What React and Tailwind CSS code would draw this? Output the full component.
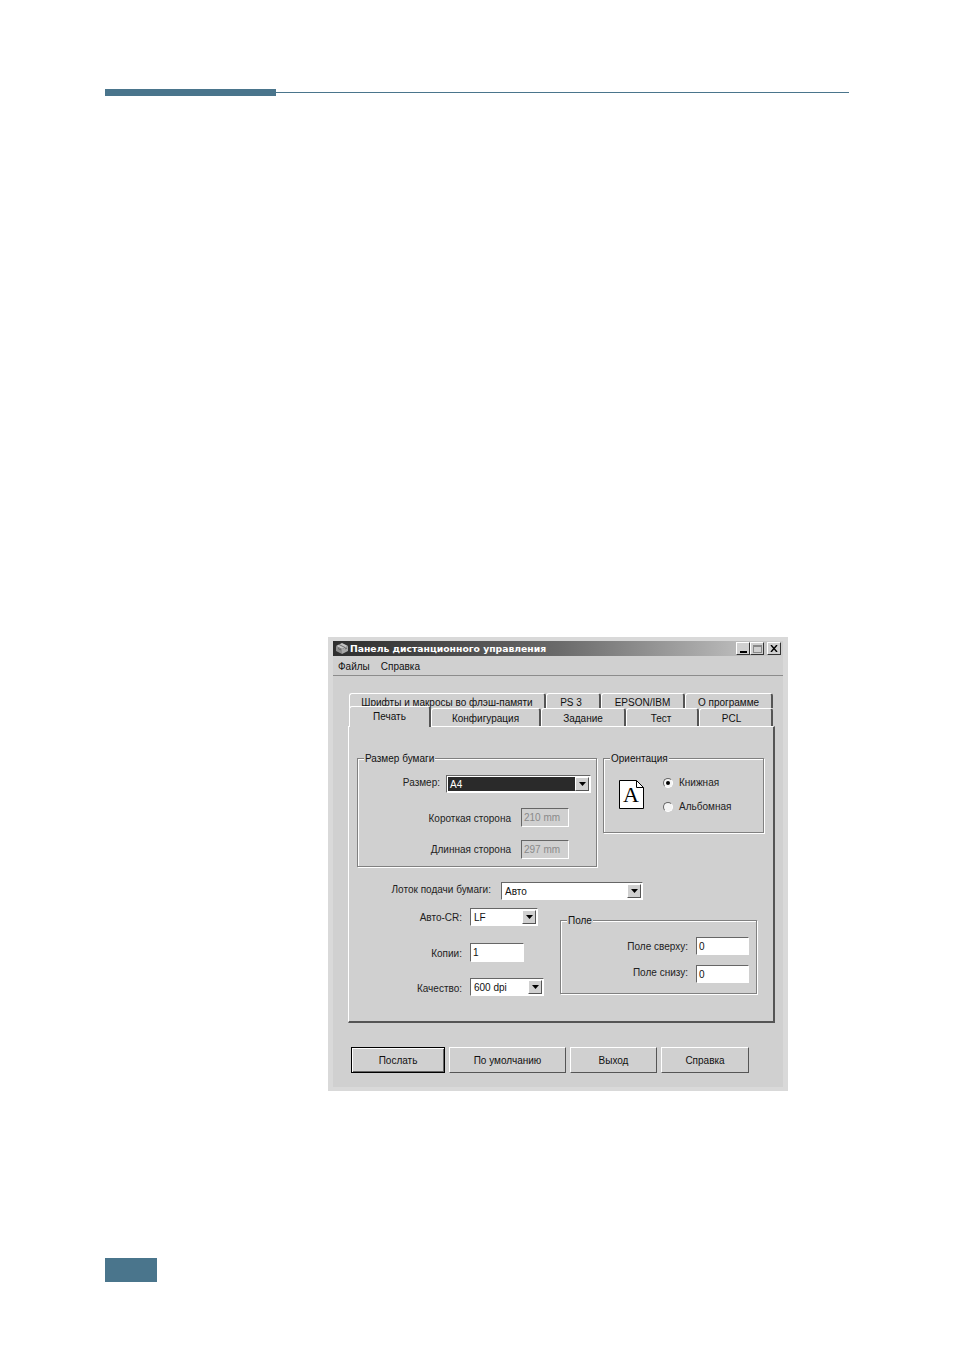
import React from 'react';

const sunken = 'border border-t-[#666] border-l-[#666] border-r-white border-b-white';
const raised = 'border border-t-white border-l-white border-r-[#555] border-b-[#555]';

// ---- small win95 style controls ----

function Field({ value, w, h = 'h-[18px]', disabled = false }) {
    return (
        <div className={`${w} ${h} ${sunken} flex items-center pl-[2px] pt-px text-[10px] leading-none ${disabled ? 'bg-[#d0d0d0] text-[#8a8a8a]' : 'bg-white text-[#111]'}`}>
            {value}
        </div>
    );
}

function Combo({ value, w, selected = false }) {
    return (
        <div className={`${w} h-[18px] ${sunken} bg-white flex items-center p-px text-[10px] leading-none text-[#111]`}>
            <div className={`flex-1 h-full flex items-center pl-[2px] pt-px ${selected ? 'bg-[#2a2a2a] text-white' : ''}`}>{value}</div>
            <div className={`w-[14px] h-full bg-[#d0d0d0] ${raised} flex items-center justify-center`}>
                <svg width="7" height="4" viewBox="0 0 7 4"><path d="M0 0h7L3.5 4z" fill="#000" /></svg>
            </div>
        </div>
    );
}

function Group({ title, className, children }) {
    return (
        <div className={`relative border border-[#808080] shadow-[inset_1px_1px_0_#fff,1px_1px_0_#fff] ${className}`}>
            <span className="absolute -top-[7px] left-[6px] bg-[#d0d0d0] px-px text-[10px] leading-[14px] text-[#111]">{title}</span>
            {children}
        </div>
    );
}

function Radio({ label, checked = false }) {
    return (
        <div className="flex items-center gap-[6px] h-[10px]">
            <div className="w-[10px] h-[10px] rounded-full border border-t-[#666] border-l-[#666] border-r-white border-b-white bg-[#f4f4f4] flex items-center justify-center">
                {checked && <div className="w-[4px] h-[4px] rounded-full bg-black" />}
            </div>
            <span className="text-[10px] leading-none text-[#222]">{label}</span>
        </div>
    );
}

function Tab({ label, w, active = false }) {
    return (
        <div className={`${w} flex items-center justify-center rounded-t-[3px] border-t border-l border-t-white border-l-white border-r-2 border-r-[#555] bg-[#d0d0d0] text-[10px] leading-none text-[#111] ${active ? 'h-[21px] -mt-[2px] -mb-px relative z-10' : 'h-[18px] pt-[3px]'}`}>
            {label}
        </div>
    );
}

function Button({ label, w, primary = false }) {
    return (
        <div className={`${w} h-[26px] bg-[#d0d0d0] flex items-center justify-center pt-[2px] text-[10px] leading-none text-[#111] ${primary ? 'border border-black shadow-[inset_1px_1px_0_#fff,inset_-1px_-1px_0_#666]' : 'border border-t-white border-l-white border-r-[#555] border-b-[#555]'}`}>
            {label}
        </div>
    );
}

function WinButton({ children, className = '' }) {
    return (
        <div className={`w-[14px] h-[13px] bg-[#d0d0d0] border border-t-white border-l-white border-r-[#333] border-b-[#333] flex items-center justify-center ${className}`}>
            {children}
        </div>
    );
}

// ---- the dialog ----

function Dialog() {
    return (
        <div className="ml-[223px] mt-[541px] w-[460px] h-[454px] bg-[#d9d9d9] pt-[4px] pl-[5px]" style={{ fontFamily: '"Liberation Sans", Arial, sans-serif' }}>
            <div className="w-[450px] h-[446px] bg-[#d0d0d0] flex flex-col">
                {/* Title bar */}
                <div className="h-[15px] bg-gradient-to-r from-[#2e2e2e] via-[#6a6a6a] to-[#cfcfcf] flex items-center pl-[2px] pr-[2px]">
                    <svg width="14" height="13" viewBox="0 0 14 13">
                        <path d="M7 1l6 3-6 3-6-3z" fill="#c4c4c4" />
                        <path d="M1 4l6 3v5L1 9z" fill="#8d8d8d" />
                        <path d="M13 4L7 7v5l6-3z" fill="#a8a8a8" />
                        <path d="M4 2.5l6 3M3 6.5l3 1.5M10 7l2-1" stroke="#555" strokeWidth="0.8" fill="none" />
                    </svg>
                    <span className="ml-px text-[9.25px] font-bold leading-none text-white whitespace-nowrap" style={{ fontFamily: '"DejaVu Sans", sans-serif' }}>Панель дистанционного управления</span>
                    <div className="ml-auto flex">
                        <WinButton>
                            <div className="w-[7px] h-[2px] bg-black mt-[6px]" />
                        </WinButton>
                        <WinButton className="mr-[3px]">
                            <div className="w-[9px] h-[8px] border border-[#888] border-t-2" />
                        </WinButton>
                        <WinButton>
                            <svg width="8" height="7" viewBox="0 0 8 7"><path d="M1 0l6 7M7 0L1 7" stroke="#000" strokeWidth="1.4" /></svg>
                        </WinButton>
                    </div>
                </div>

                {/* Menu */}
                <div className="h-[20px] flex items-center gap-[11px] pl-[5px] pt-[3px] text-[10px] leading-none text-[#111] border-b border-[#8c8c8c]">
                    <span>Файлы</span>
                    <span>Справка</span>
                </div>

                {/* Tabs */}
                <div className="mt-[17px] ml-[16px] w-[424px]">
                    <div className="flex h-[15px]">
                        <Tab label="Шрифты и макросы во флэш-памяти" w="w-[197px] !h-[15px]" />
                        <Tab label="PS 3" w="w-[55px] !h-[15px] pr-[4px]" />
                        <Tab label="EPSON/IBM" w="w-[84px] !h-[15px]" />
                        <Tab label="О программе" w="w-[88px] !h-[15px]" />
                    </div>
                    <div className="flex h-[18px]">
                        <Tab label="Печать" w="w-[82px]" active />
                        <Tab label="Конфигурация" w="w-[110px]" />
                        <Tab label="Задание" w="w-[85px]" />
                        <Tab label="Тест" w="w-[73px] pr-[2px]" />
                        <Tab label="PCL" w="w-[74px] pr-[8px]" />
                    </div>
                </div>

                {/* Panel */}
                <div className="ml-[15px] w-[427px] h-[297px] border-t border-l border-t-white border-l-white border-r-2 border-b-2 border-r-[#555] border-b-[#555] pt-[31px] pl-[8px]">
                    <div className="flex items-start gap-[6px]">
                        <Group title="Размер бумаги" className="w-[240px] h-[109px] pt-[16px]">
                            <div className="flex items-center gap-[6px]">
                                <span className="w-[82px] text-right text-[10px] leading-none text-[#222] pb-[3px]">Размер:</span>
                                <Combo value="A4" w="w-[145px]" selected />
                            </div>
                            <div className="mt-[15px] flex items-center gap-[10px]">
                                <span className="w-[153px] text-right text-[10px] leading-none text-[#222] pt-[3px]">Короткая сторона</span>
                                <Field value="210 mm" w="w-[48px]" h="h-[19px]" disabled />
                            </div>
                            <div className="mt-[13px] flex items-center gap-[10px]">
                                <span className="w-[153px] text-right text-[10px] leading-none text-[#222]">Длинная сторона</span>
                                <Field value="297 mm" w="w-[48px]" h="h-[19px]" disabled />
                            </div>
                        </Group>
                        <Group title="Ориентация" className="w-[161px] h-[75px] pl-[15px] pt-[19px] flex">
                            <svg width="25" height="29" viewBox="0 0 25 29" className="mt-[2px]">
                                <path d="M.5.5h17l7 7v21H.5z" fill="#fff" stroke="#000" />
                                <path d="M17.5.5v7h7" fill="none" stroke="#000" />
                                <text x="12" y="22" textAnchor="middle" fontFamily="Liberation Serif, serif" fontSize="22" fill="#000">A</text>
                            </svg>
                            <div className="ml-[19px] flex flex-col gap-[14px]">
                                <Radio label="Книжная" checked />
                                <Radio label="Альбомная" />
                            </div>
                        </Group>
                    </div>

                    <div className="mt-[15px] flex items-center gap-[10px]">
                        <span className="w-[134px] text-right text-[10px] leading-none text-[#222] pb-[3px]">Лоток подачи бумаги:</span>
                        <Combo value="Авто" w="w-[142px]" />
                    </div>

                    <div className="mt-[8px] flex items-start">
                        <div className="w-[203px] flex flex-col">
                            <div className="flex items-center gap-[8px]">
                                <span className="w-[105px] text-right text-[10px] leading-none text-[#222] pt-[2px]">Авто-CR:</span>
                                <Combo value="LF" w="w-[68px]" />
                            </div>
                            <div className="mt-[17px] flex items-center gap-[8px]">
                                <span className="w-[105px] text-right text-[10px] leading-none text-[#222] pt-[3px]">Копии:</span>
                                <Field value="1" w="w-[54px]" h="h-[19px]" />
                            </div>
                            <div className="mt-[16px] flex items-center gap-[8px]">
                                <span className="w-[105px] text-right text-[10px] leading-none text-[#222] pt-[3px]">Качество:</span>
                                <Combo value="600 dpi" w="w-[74px]" />
                            </div>
                        </div>
                        <Group title="Поле" className="mt-[12px] w-[197px] h-[74px] pt-[16px]">
                            <div className="flex items-center gap-[8px]">
                                <span className="w-[127px] text-right text-[10px] leading-none text-[#222] pt-[2px]">Поле сверху:</span>
                                <Field value="0" w="w-[53px]" />
                            </div>
                            <div className="mt-[10px] flex items-center gap-[8px]">
                                <span className="w-[127px] text-right text-[10px] leading-none text-[#222] pb-[3px]">Поле снизу:</span>
                                <Field value="0" w="w-[53px]" />
                            </div>
                        </Group>
                    </div>
                </div>

                {/* Buttons */}
                <div className="mt-[24px] ml-[18px] flex gap-[4px]">
                    <Button label="Послать" w="w-[94px]" primary />
                    <Button label="По умолчанию" w="w-[117px]" />
                    <Button label="Выход" w="w-[87px]" />
                    <Button label="Справка" w="w-[88px]" />
                </div>
            </div>
        </div>
    );
}

export default function App() {
    return (
        <div className="w-[954px] h-[1346px] bg-white overflow-hidden pl-[105px] pt-[89px]">
            {/* Header rule */}
            <div className="w-[744px] h-[7px] flex items-center">
                <div className="w-[171px] h-[7px] bg-[#4a758c]" />
                <div className="flex-1 h-px bg-[#4a758c]" />
            </div>

            <Dialog />

            {/* Page number block */}
            <div className="mt-[167px] w-[52px] h-[24px] bg-[#4a758c]" />
        </div>
    );
}
